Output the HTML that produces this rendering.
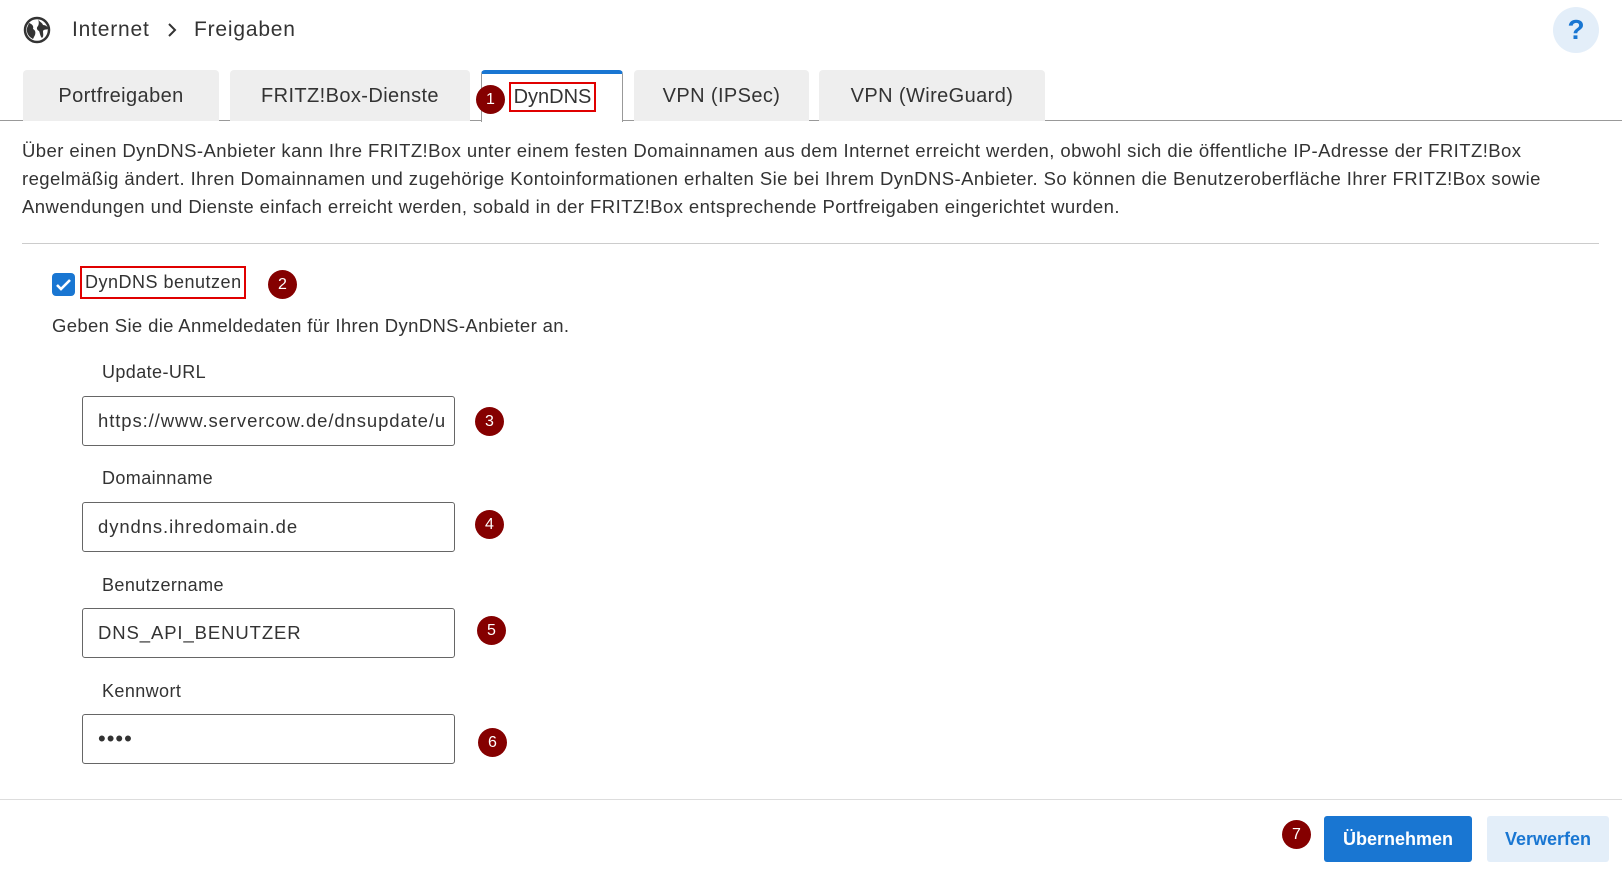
<!DOCTYPE html>
<html><head><meta charset="utf-8"><style>
*{box-sizing:border-box;margin:0;padding:0}
body{width:1622px;height:881px;background:#fff;font-family:"Liberation Sans",sans-serif;color:#333;position:relative;overflow:hidden}
.a{position:absolute;white-space:nowrap}
.tab{position:absolute;top:70px;height:51px;background:#eeeeee;border-radius:4px 4px 0 0;font-size:20px;letter-spacing:0.4px;color:#333;text-align:center;line-height:52px}
.badge{position:absolute;width:29px;height:29px;border-radius:50%;background:#850000;color:#fff;font-size:16px;text-align:center;line-height:29px}
.lbl{position:absolute;left:102px;font-size:18px;letter-spacing:0.4px;color:#333}
.inp{position:absolute;left:82px;width:373px;height:50px;border:1px solid #666;border-radius:3px;font-size:18.5px;letter-spacing:0.9px;padding-left:15px;line-height:48px;color:#333;overflow:hidden}
p{font-size:18.5px;letter-spacing:0.43px;line-height:28px}
</style></head><body>
<svg class="a" style="left:23px;top:16px" width="28" height="28" viewBox="0 0 28 28"><circle cx="14" cy="14" r="12" fill="none" stroke="#333" stroke-width="2.5"/><path d="M6 7c3 1 5 3 4 6 2 1 3 3 2 6l-2 4c-4-2-7-6-6-11z M15 3c1 3 4 3 5 6 3 0 5 2 5 4-2 1-4 0-5 2 0 3 1 5-1 7-2-2-2-5-3-7-2-1-3-3-1-5 1-2 1-4 0-7z" fill="#333"/></svg>
<div class="a" style="left:72px;top:18px;font-size:21px;letter-spacing:0.8px">Internet</div>
<svg class="a" style="left:166px;top:21px" width="12" height="18"><path d="M3 3l6 6-6 6" fill="none" stroke="#333" stroke-width="2"/></svg>
<div class="a" style="left:194px;top:18px;font-size:21px;letter-spacing:0.8px">Freigaben</div>
<div class="a" style="left:1553px;top:7px;width:46px;height:46px;border-radius:50%;background:#e3eef9;color:#1976d2;font-size:28px;font-weight:bold;text-align:center;line-height:46px">?</div>

<div class="a" style="left:0;top:120px;width:1622px;height:1px;background:#999"></div>
<div class="tab" style="left:23px;width:196px">Portfreigaben</div>
<div class="tab" style="left:230px;width:240px">FRITZ!Box-Dienste</div>
<div class="tab" style="left:481px;width:142px;background:#fff;border:1px solid #999;border-bottom:none;border-top:4px solid #1976d2;height:52px;line-height:44px"></div>
<div class="a" style="left:509px;top:82px;width:87px;height:30px;border:2px solid #e00000;font-size:20px;line-height:26px;text-align:center">DynDNS</div>
<div class="badge" style="left:476px;top:85px">1</div>
<div class="tab" style="left:634px;width:175px">VPN (IPSec)</div>
<div class="tab" style="left:819px;width:226px">VPN (WireGuard)</div>

<div class="a" style="left:22px;top:137px"><p>Über einen DynDNS-Anbieter kann Ihre FRITZ!Box unter einem festen Domainnamen aus dem Internet erreicht werden, obwohl sich die öffentliche IP-Adresse der FRITZ!Box</p><p>regelmäßig ändert. Ihren Domainnamen und zugehörige Kontoinformationen erhalten Sie bei Ihrem DynDNS-Anbieter. So können die Benutzeroberfläche Ihrer FRITZ!Box sowie</p><p>Anwendungen und Dienste einfach erreicht werden, sobald in der FRITZ!Box entsprechende Portfreigaben eingerichtet wurden.</p></div>
<div class="a" style="left:22px;top:243px;width:1577px;height:1px;background:#ccc"></div>

<div class="a" style="left:52px;top:273px;width:23px;height:23px;border-radius:4px;background:#1976d2"><svg width="23" height="23"><path d="M5 12l4 4 9-9" fill="none" stroke="#fff" stroke-width="2.6"/></svg></div>
<div class="a" style="left:80px;top:266px;width:166px;height:33px;border:2px solid #e00000;font-size:18px;letter-spacing:0.5px;line-height:29px;padding-left:3px">DynDNS benutzen</div>
<div class="badge" style="left:268px;top:270px">2</div>
<div class="a" style="left:52px;top:315px;font-size:18.5px;letter-spacing:0.35px">Geben Sie die Anmeldedaten für Ihren DynDNS-Anbieter an.</div>

<div class="lbl" style="top:362px">Update-URL</div>
<div class="inp" style="top:396px">https://www.servercow.de/dnsupdate/u</div>
<div class="badge" style="left:475px;top:407px">3</div>
<div class="lbl" style="top:468px">Domainname</div>
<div class="inp" style="top:502px">dyndns.ihredomain.de</div>
<div class="badge" style="left:475px;top:510px">4</div>
<div class="lbl" style="top:575px">Benutzername</div>
<div class="inp" style="top:608px">DNS_API_BENUTZER</div>
<div class="badge" style="left:477px;top:616px">5</div>
<div class="lbl" style="top:681px">Kennwort</div>
<div class="inp" style="top:714px;font-size:22px;letter-spacing:1px">••••</div>
<div class="badge" style="left:478px;top:728px">6</div>

<div class="a" style="left:0;top:799px;width:1622px;height:1px;background:#ddd"></div>
<div class="badge" style="left:1282px;top:820px">7</div>
<div class="a" style="left:1324px;top:816px;width:148px;height:46px;background:#1976d2;border-radius:3px;color:#fff;font-weight:bold;font-size:18px;text-align:center;line-height:46px">Übernehmen</div>
<div class="a" style="left:1487px;top:816px;width:122px;height:46px;background:#e3eef9;border-radius:3px;color:#1976d2;font-weight:bold;font-size:18px;text-align:center;line-height:46px">Verwerfen</div>
</body></html>
